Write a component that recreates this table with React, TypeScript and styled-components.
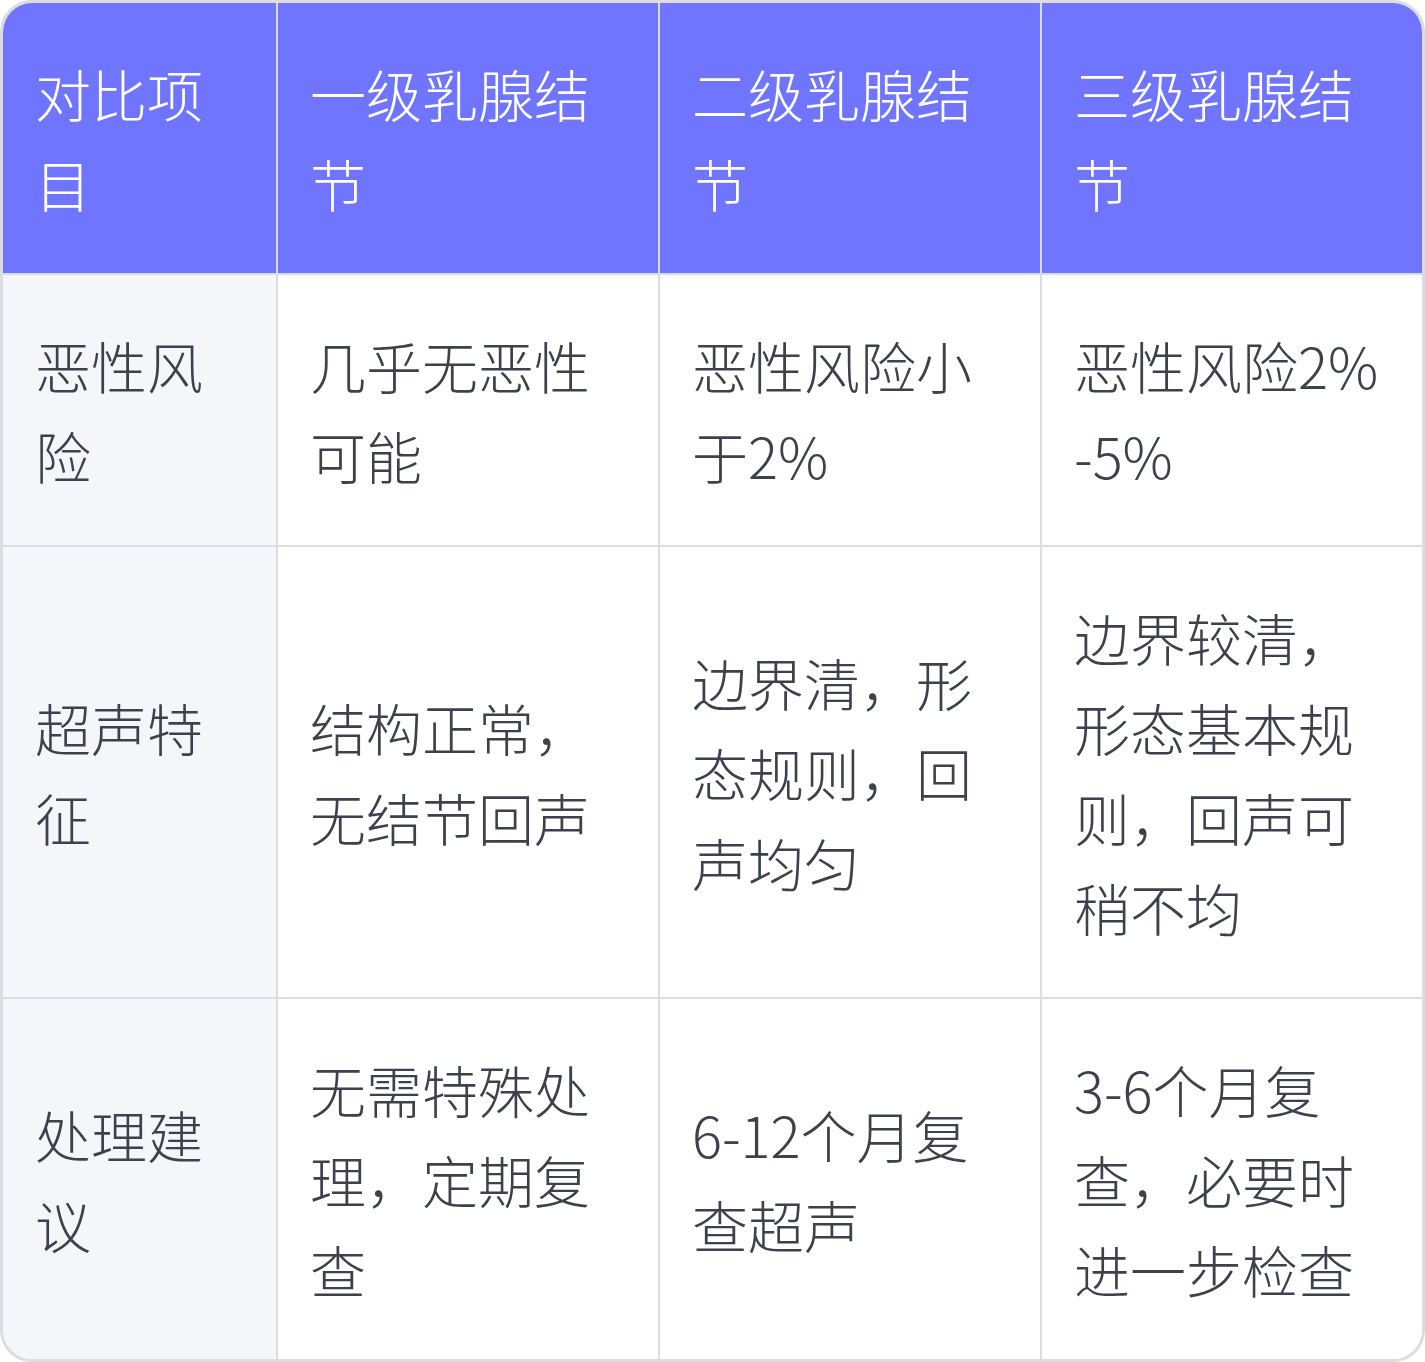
import styled, { createGlobalStyle } from "styled-components";

const GlobalStyle = createGlobalStyle`
  html, body {
    margin: 0;
    padding: 0;
    background: #ffffff;
  }
  body {
    font-family: "Noto Sans CJK SC", "Noto Sans", sans-serif;
  }
`;

const colorHeader = "#7075ff";
const colorLabel = "#f5f6fa";
const colorLine = "#dcdde2";
const colorText = "#3d414c";

const TableFrame = styled.div`
  width: 1425px;
  box-sizing: border-box;
  border: 3px solid ${colorLine};
  border-radius: 32px;
  overflow: hidden;
`;

const Grid = styled.div`
  display: grid;
  grid-template-columns: 275px 382px 382px 1fr;
`;

const Cell = styled.div<{ $head?: boolean; $label?: boolean; $lastCol?: boolean; $lastRow?: boolean }>`
  display: flex;
  align-items: center;
  box-sizing: border-box;
  padding: 45px 32px;
  font-size: 56px;
  font-weight: 300;
  line-height: 90px;
  word-break: break-all;
  color: ${(p) => (p.$head ? "#ffffff" : colorText)};
  background: ${(p) => (p.$head ? colorHeader : p.$label ? colorLabel : "#ffffff")};
  border-right: ${(p) => (p.$lastCol ? "none" : `2px solid ${colorLine}`)};
  border-bottom: ${(p) => (p.$lastRow ? "none" : `2px solid ${colorLine}`)};
`;

const header = ["对比项目", "一级乳腺结节", "二级乳腺结节", "三级乳腺结节"];

const rows = [
  ["恶性风险", "几乎无恶性可能", "恶性风险小于2%", "恶性风险2%-5%"],
  ["超声特征", "结构正常，无结节回声", "边界清，形态规则，回声均匀", "边界较清，形态基本规则，回声可稍不均"],
  ["处理建议", "无需特殊处理，定期复查", "6-12个月复查超声", "3-6个月复查，必要时进一步检查"],
];

export default function App() {
  return (
    <>
      <GlobalStyle />
      <TableFrame>
        <Grid>
          {header.map((text, i) => (
            <Cell key={text} $head $lastCol={i === header.length - 1}>
              {text}
            </Cell>
          ))}
          {rows.map((row, r) =>
            row.map((text, c) => (
              <Cell
                key={`${r}-${c}`}
                $label={c === 0}
                $lastCol={c === row.length - 1}
                $lastRow={r === rows.length - 1}
              >
                {text}
              </Cell>
            ))
          )}
        </Grid>
      </TableFrame>
    </>
  );
}
